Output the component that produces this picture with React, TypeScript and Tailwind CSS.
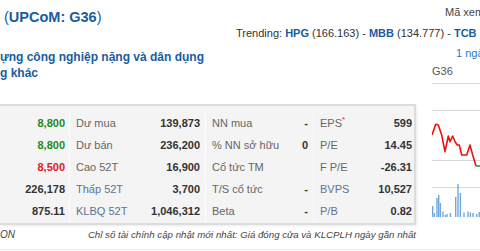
import React from 'react';

type Cell = { v: string; c?: string };

const rows: { a: Cell; b: string; bl?: boolean; c: string; d: string; e: string; f: string; fl?: boolean; star?: boolean; g: string }[] = [
  { a: { v: '8,800', c: 'text-[#1f8a1f]' }, b: 'Dư mua', c: '139,873', d: 'NN mua', e: '-', f: 'EPS', star: true, g: '599' },
  { a: { v: '8,800', c: 'text-[#1f8a1f]' }, b: 'Dư bán', c: '236,200', d: '% NN sở hữu', e: '0', f: 'P/E', g: '14.45' },
  { a: { v: '8,500', c: 'text-[#e3141e]' }, b: 'Cao 52T', c: '16,900', d: 'Cổ tức TM', e: '', f: 'F P/E', g: '-26.31' },
  { a: { v: '226,178' }, b: 'Thấp 52T', bl: true, c: '3,700', d: 'T/S cổ tức', e: '-', f: 'BVPS', fl: true, g: '10,527' },
  { a: { v: '875.11' }, b: 'KLBQ 52T', bl: true, c: '1,046,312', d: 'Beta', e: '-', f: 'P/B', fl: true, g: '0.82' },
];

const price = [
  [0, 52], [3.7, 41.3], [6.3, 42], [9.7, 52], [13, 68.7], [16.3, 53], [18, 58.7], [20.7, 53],
  [23, 58.7], [25.3, 62], [27.3, 62], [29.7, 72], [34.7, 72], [38, 62], [40.7, 72], [44, 83],
];

const bars = [
  [0, 11], [1.7, 4], [4.3, 19], [6, 22], [7.7, 14], [10.3, 5.5], [12.7, 2], [14.3, 3], [17.7, 4],
  [23, 20], [25.3, 33], [27.7, 24], [31.3, 4.5], [35.3, 5.5], [37.7, 4.5], [40.3, 4], [44, 3], [46.5, 5],
];

const MiniChart: React.FC = () => (
  <svg width="48" height="140" viewBox="0 0 48 140" className="block">
    {[0.5, 27.5, 77.5, 104.5].map((y) => (
      <line key={y} x1="0" x2="48" y1={y} y2={y} stroke="#d9d9d9" strokeWidth="1" />
    ))}
    {bars.map(([x, h], i) => (
      <rect key={i} x={x} y={134 - h} width="1.4" height={h} fill="#6fa8dc" />
    ))}
    <polyline
      points={price.map((p) => p.join(',')).join(' ')}
      fill="none"
      stroke="#ee1111"
      strokeWidth="1.6"
      strokeLinejoin="round"
    />
    <polyline points="44,83 48,83" fill="none" stroke="#2e9a2e" strokeWidth="1.6" />
  </svg>
);

export default function App() {
  return (
    <div className="w-[480px] h-[251px] overflow-hidden bg-white relative font-['Liberation_Sans',Arial,sans-serif] text-[#333]">
      <div className="flex">
        <div className="w-[416px] shrink-0">
          <div className="mt-[8px] pl-[4px] text-[14.5px] leading-[18px] text-[#1a5c9e] whitespace-nowrap">
            (<span className="font-bold">UPCoM: G36</span>)
          </div>
          <div className="ml-[236px] text-[11px] leading-[14px] whitespace-nowrap">
            Trending: <span className="font-bold text-[#1a5c9e]">HPG</span> (166.163) -{' '}
            <span className="font-bold text-[#1a5c9e]">MBB</span> (134.777) -{' '}
            <span className="font-bold text-[#1a5c9e]">TCB</span>
          </div>
          <div className="mt-[9px] text-[12px] leading-[16px] font-bold text-[#1a5c9e] whitespace-nowrap">
            <div>ựng công nghiệp nặng và dân dụng</div>
            <div>g khác</div>
          </div>

          <div className="mt-[23px] bg-[#f4f4f4] border-t-2 border-b-2 border-r-2 border-[#dcdcdc] pt-[6px] pb-[1px] shadow-[1px_1px_2px_rgba(0,0,0,0.08)] text-[11px]">
            {rows.map((r, i) => (
              <div key={i} className="grid grid-cols-[69px_61px_75px_75px_33px_47px_1fr] h-[22px] items-center">
                <div className={`text-right pr-[4px] font-bold ${r.a.c ?? 'text-[#333]'}`}>{r.a.v}</div>
                <div className={`pl-[6px] border-l border-[#fbfbfb] h-full flex items-center ${r.bl ? 'text-[#5d7393]' : 'text-[#666]'}`}>{r.b}</div>
                <div className="text-right pr-[5px] font-bold">{r.c}</div>
                <div className="pl-[6px] text-[#666] border-l border-[#fbfbfb] h-full flex items-center whitespace-nowrap">{r.d}</div>
                <div className="text-right pr-[5px] font-bold">{r.e}</div>
                <div className={`pl-[6px] border-l border-[#fbfbfb] h-full flex items-center ${r.fl ? 'text-[#5d7393]' : 'text-[#666]'}`}>
                  {r.f}
                  {r.star && <span className="text-[#e3141e] text-[8px] leading-none self-start mt-[4px]">*</span>}
                </div>
                <div className="text-right pr-[2px] font-bold">{r.g}</div>
              </div>
            ))}
          </div>

          <div className="mt-[3px] flex items-center text-[9.7px] leading-[14px] italic text-[#444] whitespace-nowrap">
            <span className="text-[10px]">ON</span>
            <span className="ml-auto">Chỉ số tài chính cập nhật mới nhất: Giá đóng cửa và KLCPLH ngày gần nhất</span>
          </div>
        </div>

        <div className="ml-[16px] flex flex-col whitespace-nowrap">
          <div className="mt-[5px] ml-[13px] text-[11px] leading-[14px] text-[#444]">Mã xem</div>
          <div className="mt-[27px] ml-[24px] text-[11px] leading-[14px] text-[#2a7ab8]">1 ngày</div>
          <div className="mt-[4px] text-[11px] leading-[14px] text-[#555]">G36</div>
          <div className="mt-[5px]">
            <MiniChart />
          </div>
        </div>
      </div>
      <div className="absolute left-0 right-0 top-[249px] h-px bg-[#e8e8e8]" />
    </div>
  );
}
